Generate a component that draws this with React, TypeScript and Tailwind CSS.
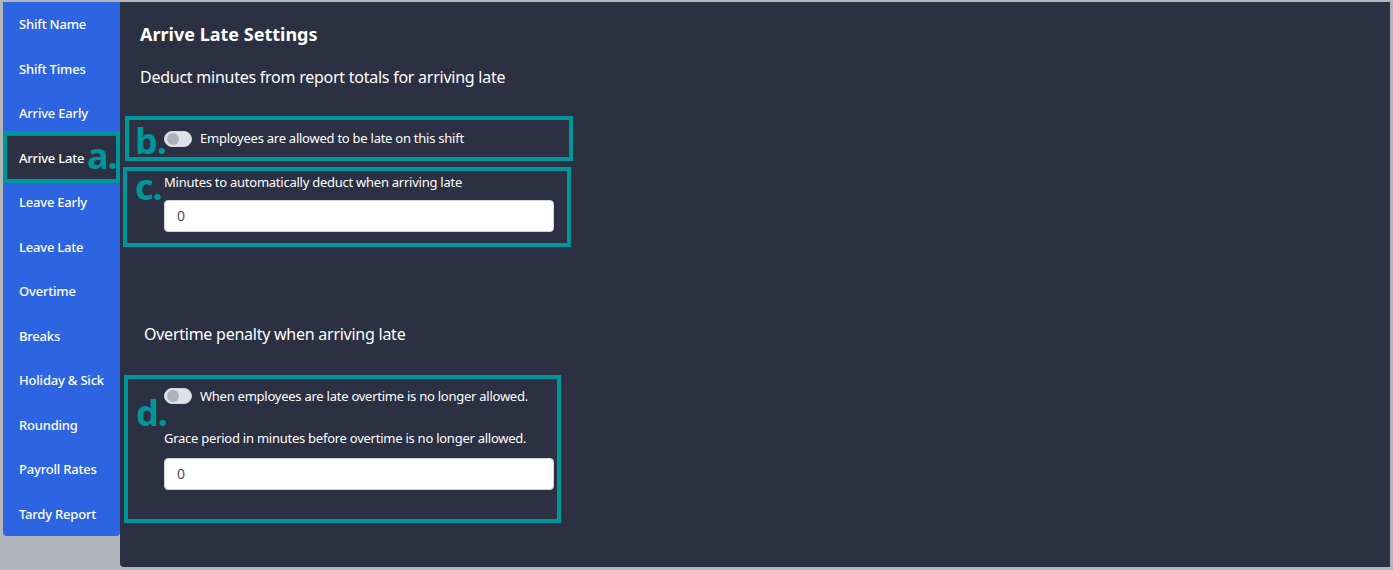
import React from 'react';

const NAV = [
  'Shift Name',
  'Shift Times',
  'Arrive Early',
  'Arrive Late',
  'Leave Early',
  'Leave Late',
  'Overtime',
  'Breaks',
  'Holiday & Sick',
  'Rounding',
  'Payroll Rates',
  'Tardy Report',
];

const font = { fontFamily: '"Noto Sans", "Open Sans", sans-serif' };

// Annotation letter drawn over the screenshot (a., b., c., d.)
const Mark: React.FC<{ children: React.ReactNode; className: string }> = ({ children, className }) => (
  <span
    className={`absolute text-[36px] font-bold leading-none tracking-[-1px] text-[#00979b] ${className}`}
  >
    {children}
  </span>
);

const Toggle: React.FC = () => (
  <span className="relative inline-block h-4 w-7 shrink-0 rounded-full border border-[#d5d9de] bg-[#dfe3e8]">
    <span className="absolute left-[2px] top-[1px] h-3 w-3 rounded-full bg-[#adb3bb]" />
  </span>
);

const NumberInput: React.FC = () => (
  <input
    type="text"
    defaultValue="0"
    className="h-8 w-[390px] rounded border border-[#ced4da] bg-white px-3 text-[14px] text-[#495057] outline-none"
  />
);

export default function App() {
  return (
    <div
      className="flex h-[570px] w-[1393px] bg-[#b2b5b9] pt-[2px] pb-[3px] pl-[3px] pr-[3px] text-white tracking-[-0.25px]"
      style={font}
    >
      {/* Sidebar */}
      <nav className="w-[117px] shrink-0 self-start rounded-b bg-[#2d64e2]">
        {NAV.map((item) => {
          const active = item === 'Arrive Late';
          return (
            <div
              key={item}
              className={`relative flex h-[44.5px] items-center pl-4 pt-[1px] text-[13px] font-medium tracking-[-0.2px] ${
                active ? 'bg-[#2b3043]' : ''
              }`}
            >
              {item}
              {active && (
                <>
                  <span className="absolute -top-[5px] -bottom-[3px] left-0 right-0 border-4 border-[#00979b]" />
                  <Mark className="left-[84px] top-[2px]">a.</Mark>
                </>
              )}
            </div>
          );
        })}
      </nav>

      {/* Main panel */}
      <main className="flex-1 rounded-bl bg-[#2b3043] pt-[19px]">
        <div className="pl-5">
          <h1 className="text-[18px] font-bold leading-[27px] tracking-normal">Arrive Late Settings</h1>
          <p className="mt-[17px] text-[16px] leading-6">Deduct minutes from report totals for arriving late</p>
        </div>

        {/* b. */}
        <div className="relative ml-[5px] mt-[27px] flex h-[45px] w-[448px] items-center gap-2 border-4 border-[#00979b] pl-[35px] text-[13px]">
          <Mark className="left-[6px] top-[3px]">b.</Mark>
          <Toggle />
          <span>Employees are allowed to be late on this shift</span>
        </div>

        {/* c. */}
        <div className="relative ml-[3px] mt-[6px] w-[448px] border-4 border-[#00979b] pt-[2px] pb-[11px] pl-[37px] text-[13px]">
          <Mark className="left-[8px] top-[-2px]">c.</Mark>
          <div className="leading-[19.5px]">Minutes to automatically deduct when arriving late</div>
          <div className="mt-[7px]">
            <NumberInput />
          </div>
        </div>

        <p className="ml-6 mt-[75px] text-[16px] leading-6">Overtime penalty when arriving late</p>

        {/* d. */}
        <div className="relative ml-[4px] mt-[29px] w-[437px] border-4 border-[#00979b] pt-[8px] pb-[29px] pl-[36px] text-[13px]">
          <Mark className="left-[8px] top-[16px]">d.</Mark>
          <div className="flex items-center gap-2 leading-[19.5px]">
            <Toggle />
            <span>When employees are late overtime is no longer allowed.</span>
          </div>
          <div className="mt-[23px] leading-[19.5px]">Grace period in minutes before overtime is no longer allowed.</div>
          <div className="mt-[9px]">
            <NumberInput />
          </div>
        </div>
      </main>
    </div>
  );
}
